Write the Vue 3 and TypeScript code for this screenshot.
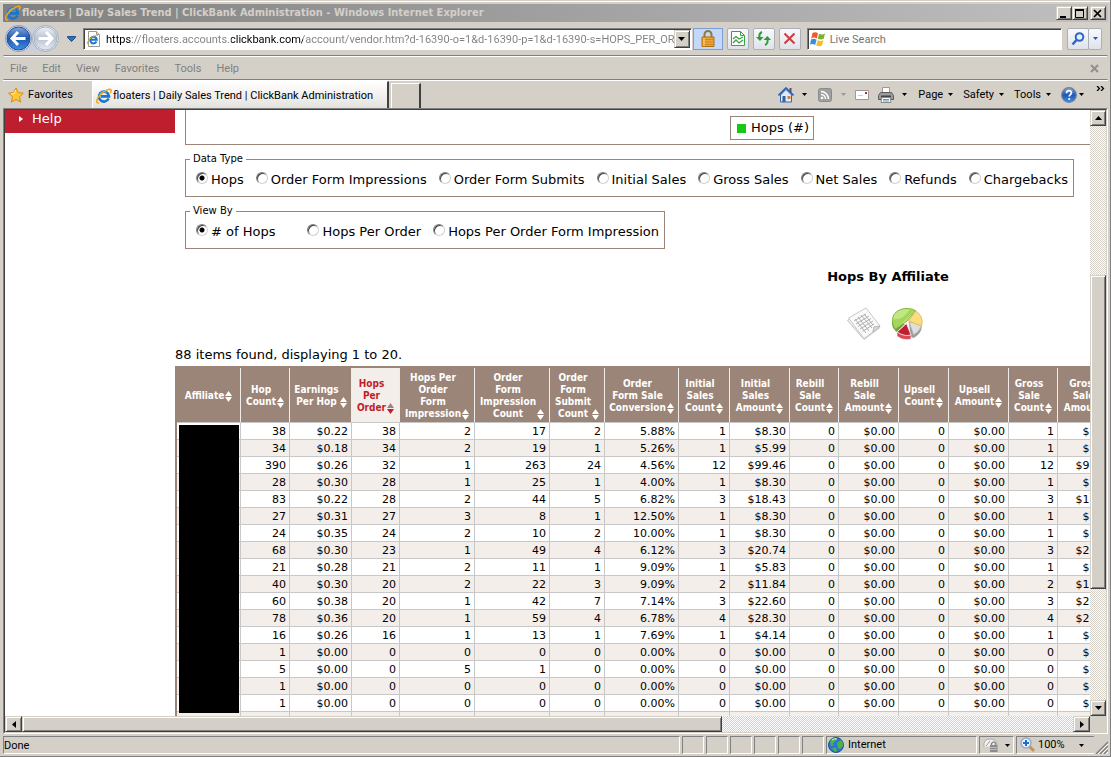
<script setup lang="ts">
import { ref } from 'vue'

interface Column {
  lines: string[]
  width: number
  sorted?: boolean
}

const columns: Column[] = [
  { lines: ['Affiliate'], width: 64 },
  { lines: ['Hop', 'Count'], width: 49 },
  { lines: ['Earnings', 'Per Hop'], width: 62 },
  { lines: ['Hops', 'Per', 'Order'], width: 48, sorted: true },
  { lines: ['Hops Per', 'Order', 'Form', 'Impression'], width: 75 },
  { lines: ['Order', 'Form', 'Impression', 'Count'], width: 75 },
  { lines: ['Order', 'Form', 'Submit', 'Count'], width: 55 },
  { lines: ['Order', 'Form Sale', 'Conversion'], width: 74 },
  { lines: ['Initial', 'Sales', 'Count'], width: 51 },
  { lines: ['Initial', 'Sales', 'Amount'], width: 60 },
  { lines: ['Rebill', 'Sale', 'Count'], width: 49 },
  { lines: ['Rebill', 'Sale', 'Amount'], width: 60 },
  { lines: ['Upsell', 'Count'], width: 50 },
  { lines: ['Upsell', 'Amount'], width: 60 },
  { lines: ['Gross', 'Sale', 'Count'], width: 49 },
  { lines: ['Gross', 'Sale', 'Amount'], width: 60 },
]

type Figures = [string, string, string, string, string, string, string, string, string]

const figures: Figures[] = [
  ['38', '$0.22', '38', '2', '17', '2', '5.88%', '1', '$8.30'],
  ['34', '$0.18', '34', '2', '19', '1', '5.26%', '1', '$5.99'],
  ['390', '$0.26', '32', '1', '263', '24', '4.56%', '12', '$99.46'],
  ['28', '$0.30', '28', '1', '25', '1', '4.00%', '1', '$8.30'],
  ['83', '$0.22', '28', '2', '44', '5', '6.82%', '3', '$18.43'],
  ['27', '$0.31', '27', '3', '8', '1', '12.50%', '1', '$8.30'],
  ['24', '$0.35', '24', '2', '10', '2', '10.00%', '1', '$8.30'],
  ['68', '$0.30', '23', '1', '49', '4', '6.12%', '3', '$20.74'],
  ['21', '$0.28', '21', '2', '11', '1', '9.09%', '1', '$5.83'],
  ['40', '$0.30', '20', '2', '22', '3', '9.09%', '2', '$11.84'],
  ['60', '$0.38', '20', '1', '42', '7', '7.14%', '3', '$22.60'],
  ['78', '$0.36', '20', '1', '59', '4', '6.78%', '4', '$28.30'],
  ['16', '$0.26', '16', '1', '13', '1', '7.69%', '1', '$4.14'],
  ['1', '$0.00', '0', '0', '0', '0', '0.00%', '0', '$0.00'],
  ['5', '$0.00', '0', '5', '1', '0', '0.00%', '0', '$0.00'],
  ['1', '$0.00', '0', '0', '0', '0', '0.00%', '0', '$0.00'],
  ['1', '$0.00', '0', '0', '0', '0', '0.00%', '0', '$0.00'],
]

const rows: string[][] = figures.map((f) => ['', ...f, '0', '$0.00', '0', '$0.00', f[7], f[8]])

const dataTypes = ['Hops', 'Order Form Impressions', 'Order Form Submits', 'Initial Sales', 'Gross Sales', 'Net Sales', 'Refunds', 'Chargebacks']
const viewBys = ['# of Hops', 'Hops Per Order', 'Hops Per Order Form Impression']
const menus = ['File', 'Edit', 'View', 'Favorites', 'Tools', 'Help']
const commands = ['Page', 'Safety', 'Tools']

const dataType = ref('Hops')
const viewBy = ref('# of Hops')
const url = ref('https://floaters.accounts.clickbank.com/account/vendor.htm?d-16390-o=1&d-16390-p=1&d-16390-s=HOPS_PER_OR')
</script>

<template>
  <div class="window">
    <svg class="defs" width="0" height="0" aria-hidden="true">
      <defs>
        <linearGradient id="orb" x1="0" y1="0" x2="0" y2="1">
          <stop offset="0" stop-color="#7fa6df" /><stop offset=".5" stop-color="#1f56b0" /><stop offset="1" stop-color="#3f8fe8" />
        </linearGradient>
        <linearGradient id="pale" x1="0" y1="0" x2="0" y2="1">
          <stop offset="0" stop-color="#eef1f6" /><stop offset=".5" stop-color="#b9c2d1" /><stop offset="1" stop-color="#e4ebf5" />
        </linearGradient>
        <symbol id="ie" viewBox="0 0 16 16">
          <path d="M12.6 10.6A5 5 0 1 1 13 8.4H5" fill="none" stroke="#1976cf" stroke-width="2.6" />
          <path d="M4 6.2A4.5 4.5 0 0 1 10.5 4.300" fill="none" stroke="#63bdf5" stroke-width="1.200" />
          <path d="M3.200 14.800C-.8 15.800.2 10.800 4.600 6.400S14 .2 15 1.800c.5.8 0 2-.8 3.200" fill="none" stroke="#e9a91e" stroke-width="1.500" />
        </symbol>
        <symbol id="down" viewBox="0 0 5 3"><path d="M0 0h5L2.500 3z" /></symbol>
      </defs>
    </svg>

    <header class="titlebar">
      <svg class="i16"><use href="#ie" /></svg>
      <span class="title">floaters | Daily Sales Trend | ClickBank Administration - Windows Internet Explorer</span>
      <div class="winbtns">
        <button class="bevel" aria-label="Minimize"><svg width="10" height="9"><path d="M1 7h6v2H1z" /></svg></button>
        <button class="bevel" aria-label="Maximize"><svg width="10" height="9"><path d="M.5 1h8v7.500h-8z" fill="none" stroke="#000" /><path d="M0 0h9v2H0z" /></svg></button>
        <button class="bevel close" aria-label="Close"><svg width="10" height="9"><path d="M1 1l7 7M8 1L1 8" stroke="#000" stroke-width="1.700" /></svg></button>
      </div>
    </header>

    <div class="navrow">
      <div class="travel">
        <button aria-label="Back"><svg width="27" height="27" viewBox="0 0 27 27"><circle cx="13.500" cy="13.500" r="13" fill="#e9edf4" stroke="#8593ac" /><circle cx="13.500" cy="13.500" r="11.500" fill="url(#orb)" stroke="#274d8e" /><path d="M13 7l-6 6.500 6 6.500M8 13.500h12.500" fill="none" stroke="#fff" stroke-width="3" /></svg></button>
        <button aria-label="Forward"><svg width="27" height="27" viewBox="0 0 27 27"><circle cx="13.500" cy="13.500" r="13" fill="#e9edf4" stroke="#a3acbb" /><circle cx="13.500" cy="13.500" r="11.500" fill="url(#pale)" stroke="#a9b2c0" /><path d="M14 7l6 6.500-6 6.500M19 13.500H6.500" fill="none" stroke="#fff" stroke-width="3" /></svg></button>
      </div>
      <button class="recent" aria-label="Recent pages"><svg width="9" height="6"><path d="M.5.5h8v1l-4 4-4-4z" fill="#2e74b5" stroke="#1c4f8a" /></svg></button>
      <div class="address">
        <svg class="i16" viewBox="0 0 16 16"><path d="M2.500.5h8l3 3v12h-11z" fill="#fff" stroke="#999" /><path d="M10.500.5v3h3" fill="#ddd" stroke="#999" /><path d="M10.500 10.500a3.300 3.300 0 1 1 .3-1.800H4" fill="none" stroke="#1976cf" stroke-width="2" /><path d="M3 13C0 14 1 10.500 4 8s7-5 8-3" fill="none" stroke="#e9a91e" /></svg>
        <input class="url" type="text" v-model="url" aria-label="Address" />
        <button class="bevel drop" aria-label="Show addresses"><svg width="7" height="4"><path d="M0 0h7L3.500 4z" /></svg></button>
      </div>
      <button class="lock" aria-label="Security report"><svg width="14" height="17" viewBox="0 0 14 17"><path d="M3.500 8V4.500a3.500 3.500 0 0 1 7 0V8" fill="none" stroke="#8f7a3c" stroke-width="2" /><path d="M1 7h12v9.500H1z" fill="#eda52c" stroke="#b26d12" /><path d="M1 9.500h12M1 12h12M1 14.500h12" stroke="#c98a26" /><path d="M3 8v8" stroke="#ffdd8a" /></svg></button>
      <button class="tool" aria-label="Compatibility view"><svg width="14" height="15" viewBox="0 0 14 15"><path d="M.5.5h9l4 4v10H.5z" fill="#fff" stroke="#3aa13f" /><path d="M9.500.5v4h4" fill="none" stroke="#3aa13f" /><path d="M2 8l3-2.500L8 8l4-2M2 12l3-3 3 3 4-3" fill="none" stroke="#3aa13f" stroke-width="1.300" /></svg></button>
      <button class="tool" aria-label="Refresh"><svg width="15" height="15" viewBox="0 0 15 15"><path d="M6 1C3.500 2 3 4 3.500 7" fill="none" stroke="#2f9a38" stroke-width="2" /><path d="M0 6h7.500L4 10z" fill="#2f9a38" /><path d="M9 14c2.500-1 3-3 2.500-6" fill="none" stroke="#2f9a38" stroke-width="2" /><path d="M7.500 9H15l-3.700-4z" fill="#2f9a38" /></svg></button>
      <button class="tool" aria-label="Stop"><svg width="13" height="13"><path d="M1.500 1.500l10 10M11.500 1.500l-10 10" stroke="#cf3a43" stroke-width="2" /></svg></button>
      <div class="search">
        <svg class="i16" viewBox="0 0 16 16"><path d="M2.500 2Q5 .2 8 2.200L6.800 7.500Q4 5.800 1.200 7.400z" fill="#ee5a2a" /><path d="M9 2.700q3 1.500 6-.2l-1.300 5.300q-3 1.500-5.900 0z" fill="#7ab32e" /><path d="M1 8.500q2.700-1.600 5.500.2L5.200 14Q2.500 12.200 0 13.800z" fill="#3b8ede" /><path d="M7.600 9.200q3 1.500 5.800 0L12 14.500q-3 1.500-5.800-.1z" fill="#f8bc22" /></svg>
        <input type="text" placeholder="Live Search" aria-label="Live Search" />
      </div>
      <div class="split">
        <button class="tool go" aria-label="Search"><svg width="14" height="14"><circle cx="8.500" cy="5" r="3.800" fill="#e6f0ff" stroke="#2f66c4" stroke-width="2" /><path d="M5.500 8L1.500 12.500" stroke="#2f66c4" stroke-width="2.500" /></svg></button>
        <button class="tool more" aria-label="Search options"><svg width="5" height="3" fill="#215ab5"><use href="#down" /></svg></button>
      </div>
    </div>

    <nav class="menubar">
      <button v-for="m in menus" :key="m">{{ m }}</button>
      <button class="closebar" aria-label="Close toolbar"><svg width="9" height="9"><path d="M1 1l7 7M8 1L1 8" stroke="#8f8f8f" stroke-width="2" /></svg></button>
    </nav>

    <div class="tabrow">
      <button class="favs"><svg class="i16" viewBox="0 0 16 16"><path d="M8 .8l2.200 4.800 5.200.6-3.900 3.600 1.100 5.300L8 12.500l-4.600 2.600 1.100-5.300L.6 6.200l5.200-.6z" fill="#ffc936" stroke="#d98a12" /><path d="M7.700 3L6.300 6.500 3 7" fill="none" stroke="#fff3b0" /></svg>Favorites</button>
      <button class="tab"><svg class="i16"><use href="#ie" /></svg>floaters | Daily Sales Trend | ClickBank Administration</button>
      <button class="newtab" aria-label="New tab"></button>
      <div class="commands">
        <button aria-label="Home"><svg class="i16" viewBox="0 0 16 16"><path d="M11.500 1h2v4h-2z" fill="#555" /><path d="M2.500 8L8 2.500 13.500 8v7h-11z" fill="#dfe9fa" stroke="#3a66b8" /><path d="M.5 8.500L8 1l7.500 7.500" fill="none" stroke="#2b5bb6" stroke-width="1.600" /><path d="M4.500 9h3v6h-3z" fill="#365f9e" /><path d="M9.500 9h3v3h-3z" fill="#d9822f" /></svg></button>
        <svg class="arrow a1"><use href="#down" /></svg>
        <button aria-label="Feeds"><svg width="14" height="14" viewBox="0 0 14 14"><rect x=".5" y=".5" width="13" height="13" rx="2" fill="#a0a0a0" stroke="#8a8a8a" /><circle cx="4" cy="10" r="1.300" fill="#fff" /><path d="M3 6.500a4.500 4.500 0 0 1 4.500 4.500M3 3.500a7.500 7.500 0 0 1 7.500 7.500" fill="none" stroke="#fff" stroke-width="1.500" /></svg></button>
        <svg class="arrow a2"><use href="#down" /></svg>
        <button aria-label="Read mail"><svg width="14" height="10"><path d="M.5.5h13v9H.5z" fill="#fff" stroke="#9a9a9a" /><path d="M10 2h2v2h-2z" fill="#d3202c" /><path d="M3 5.500h5" stroke="#ccc" /></svg></button>
        <button class="print" aria-label="Print"><svg class="i16" viewBox="0 0 16 16"><path d="M4.500.5h7v5h-7z" fill="#fff" stroke="#999" /><path d="M2.500 5.500h11l2 3v4H.5v-4z" fill="#9b9b9b" stroke="#5c5c5c" /><path d="M3 9.500h10" stroke="#444" stroke-width="2" /><path d="M4 10.500h8l1 5H3z" fill="#fff" stroke="#8b8b8b" /><path d="M5 12.500h6M5 14h6" stroke="#4d9dbb" /></svg></button>
        <svg class="arrow a3"><use href="#down" /></svg>
        <button v-for="c in commands" :key="c" class="cmd">{{ c }}<svg class="arrow"><use href="#down" /></svg></button>
        <button class="cmd help" aria-label="Help"><svg width="16" height="16" viewBox="0 0 16 16"><circle cx="8" cy="8" r="7.300" fill="url(#orb)" stroke="#6c7f9c" stroke-width="1.300" /><path d="M5.500 6.300c0-3.500 5-3.300 5-.5 0 1.700-2.300 1.800-2.300 3.700" fill="none" stroke="#fff" stroke-width="1.700" /><circle cx="8.200" cy="12" r="1.100" fill="#fff" /></svg><svg class="arrow"><use href="#down" /></svg></button>
        <button class="chev" aria-label="More commands"><svg width="9" height="5"><path d="M1 0l2.500 2.500L1 5M5 0l2.500 2.500L5 5" fill="none" stroke="#000" stroke-width="1.300" /></svg></button>
      </div>
    </div>

    <div class="frame">
      <div class="frame-in">
        <div class="view">
          <aside><a class="helplink" href="#help"><svg width="4" height="6"><path d="M0 0l4 3-4 3z" fill="#fff" /></svg>Help</a></aside>
          <main>
            <div class="panels">
              <div class="chart"><div class="legend"><i></i>Hops (#)</div></div>
              <fieldset class="types">
                <legend>Data Type</legend>
                <label v-for="d in dataTypes" :key="d"><input type="radio" name="datatype" :value="d" v-model="dataType" />{{ d }}</label>
              </fieldset>
              <fieldset class="views">
                <legend>View By</legend>
                <label v-for="v in viewBys" :key="v"><input type="radio" name="viewby" :value="v" v-model="viewBy" />{{ v }}</label>
              </fieldset>
            </div>
            <h2>Hops By Affiliate</h2>
            <div class="modes">
              <button aria-label="Table view">
                <svg width="36" height="34" viewBox="0 0 36 34">
                  <path d="M1.500 13.500L18 2.500l16 18-16 12z" fill="#f1f1f1" stroke="#c5c5c5" />
                  <path d="M2.500 11L20 1l14 18-6 1-1 5-9 6.500z" fill="#fafafa" stroke="#c8c8c8" />
                  <path d="M34 19l-6 1-1 5z" fill="#ddd" stroke="#bbb" />
                  <path d="M9 12l11 14M12 10l11 14M15 8l11 13M18 7l9 11M8 14l12-7M10 17l13-8M12 19.500l13-8M14 22l13-8M16.500 24.500L28 17" stroke="#b0b0b0" fill="none" />
                </svg>
              </button>
              <button aria-label="Chart view">
                <svg width="32" height="34" viewBox="0 0 32 34">
                  <path d="M18 15L30.500 16v6q-2 6-8 9l-3-1z" fill="#9c9c9c" />
                  <path d="M18 15l12.500 1v3q-2 6-8 9z" fill="#dedede" stroke="#a5a5a5" stroke-width=".7" />
                  <path d="M1 13q-1 7 4.500 12L14 17z" fill="#6fa22b" />
                  <path d="M16 14L4.500 22C-1 15 0 2 16 1.500q5 0 8.500 2z" fill="#c3e684" stroke="#82b43a" />
                  <path d="M24.500 3.500L4.500 22Q1 17 1.500 12q10 2 18-10.300 3 .5 5 1.800z" fill="#8fca42" opacity=".6" />
                  <path d="M17.500 14l7.500-10q8 6 5.500 15z" fill="#fbdc81" stroke="#e6bd4e" />
                  <path d="M15.500 16.500L20 28q-7 2-14-3z" fill="#bf1f30" stroke="#fff" stroke-width=".7" />
                  <path d="M6 25q7 5 14 3v4q-8 2-14-3z" fill="#d94956" stroke="#fff" stroke-width=".5" />
                </svg>
              </button>
            </div>
            <p class="found">88 items found, displaying 1 to 20.</p>
            <div class="tablewrap">
              <table>
                <colgroup><col v-for="(c, i) in columns" :key="i" :style="{ width: c.width + 'px' }" /></colgroup>
                <thead>
                  <tr>
                    <th v-for="(c, i) in columns" :key="i" scope="col" :class="{ sorted: c.sorted }">
                      <a href="#sort">
                        <span><template v-for="(l, n) in c.lines" :key="n"><br v-if="n" />{{ l }}</template></span>
                        <svg width="7" height="11"><path class="up" d="M3.500 0L7 5H0z" /><path d="M3.500 11L7 6H0z" /></svg>
                      </a>
                    </th>
                  </tr>
                </thead>
                <tbody>
                  <tr v-for="(r, i) in rows" :key="i"><td v-for="(v, j) in r" :key="j">{{ v }}</td></tr>
                  <tr class="rest"><td v-for="(c, j) in columns" :key="j"></td></tr>
                </tbody>
              </table>
              <div class="redacted"></div>
            </div>
          </main>
        </div>
        <div class="vbar">
          <button class="bevel" aria-label="Scroll up"><svg width="7" height="4"><path d="M0 4h7L3.500 0z" /></svg></button>
          <div class="vtop"></div><div class="bevel vthumb"></div><div class="vend"></div>
          <button class="bevel" aria-label="Scroll down"><svg width="7" height="4"><path d="M0 0h7L3.500 4z" /></svg></button>
        </div>
        <div class="hbar">
          <button class="bevel" aria-label="Scroll left"><svg width="4" height="7"><path d="M4 0v7L0 3.500z" /></svg></button>
          <div class="bevel hthumb"></div><div class="hend"></div>
          <button class="bevel" aria-label="Scroll right"><svg width="4" height="7"><path d="M0 0v7l4-3.500z" /></svg></button>
        </div>
      </div>
    </div>

    <footer class="status">
      <div class="pane done">Done</div>
      <div v-for="n in 6" :key="n" class="pane small"></div>
      <div class="pane zone"><svg class="i16" viewBox="0 0 16 16"><circle cx="8" cy="8" r="7.500" fill="#2c74d6" stroke="#1b4f9e" /><path d="M2 4q3-4 7-3l-1 3-3 2 1 2-3 1zM9 6l4-3q3 3 2 6l-3 3-2-1zM4 11l4 0 1 3-2 1z" fill="#4fb248" /><path d="M4 3q3-2 5-1" stroke="#d8efff" fill="none" /></svg>Internet</div>
      <button class="pane safe" aria-label="Protected mode"><svg class="i16" viewBox="0 0 16 16"><path d="M1 10Q0 2 7 2t7 6" fill="#f3f3f3" stroke="#aaa" /><path d="M3 9l4-5" stroke="#999" /><path d="M8.500 8V6.500q2.500-3 4 0V8" fill="none" stroke="#888" stroke-width="1.500" /><path d="M7 8h7.500v7H7z" fill="#8b8b8b" /><path d="M7 10.500h7M7 12.500h7" stroke="#bbb" /></svg><svg class="arrow"><use href="#down" /></svg></button>
      <button class="pane zoomer"><svg class="i16" viewBox="0 0 16 16"><path d="M9 9l5 5" stroke="#c79255" stroke-width="3" /><circle cx="6" cy="6" r="5" fill="#e6f3ff" stroke="#9aa9bd" stroke-width="1.500" /><path d="M6 3v6M3 6h6" stroke="#1d6fd1" stroke-width="2" /></svg><span>100%</span><svg class="arrow"><use href="#down" /></svg></button>
      <svg class="grip" width="12" height="13"><path d="M0 13L12 1M4 13l8-8M8 13l4-4" stroke="#808080" stroke-width="1.500" /><path d="M2 13L12 3M6 13l6-6M10 13l2-2" stroke="#fff" /></svg>
    </footer>
  </div>
</template>

<style>
body { background: #d4d0c8; }
</style>

<style scoped>
* { box-sizing: border-box; }
.window {
  height: 100vh; overflow: hidden; display: flex; flex-direction: column;
  padding: 4px 3px 3px 3px; background: #d4d0c8; color: #000;
  box-shadow: inset -1px -1px #808080, inset 0 1px #d4d0c8, inset 0 2px #fff;
  font: 11px/14px Roboto, sans-serif; white-space: nowrap;
}
.defs { position: absolute; }
button { font: inherit; color: inherit; background: none; border: 0; padding: 0; margin: 0; display: flex; align-items: center; justify-content: center; flex: none; }
svg { flex: none; display: block; }
.i16 { width: 16px; height: 16px; }
.arrow { width: 5px; height: 3px; }
.bevel { background: #d4d0c8; border: 1px solid; border-color: #d4d0c8 #404040 #404040 #d4d0c8; box-shadow: inset 1px 1px #fff, inset -1px -1px #808080; }

.titlebar { flex: none; height: 18px; display: flex; align-items: center; padding: 0 2px; background: linear-gradient(90deg, #808080, #c0c0c0); color: #d4d0c8; font-family: "DejaVu Sans Condensed", "DejaVu Sans", sans-serif; font-weight: bold; }
.title { flex: 1; margin-left: 1px; }
.winbtns { display: flex; }
.winbtns button { width: 16px; height: 14px; }
.winbtns .close { margin-left: 2px; }

.navrow { flex: none; height: 33px; display: flex; align-items: center; padding: 0 6px 0 2px; }
.travel { display: flex; flex: none; border-radius: 14px; background: #c9d0dc; }
.recent { width: 24px; height: 20px; }
.address { flex: 610; min-width: 0; height: 22px; display: flex; align-items: center; background: #fff; border: 1px solid; border-color: #808080 #fff #fff #808080; box-shadow: inset 1px 1px #404040; padding: 1px 1px 0 2px; }
.url { flex: 1; min-width: 0; border: 0; outline: 0; padding: 2px 0 0; margin: 0 0 0 4px; font: inherit; color: transparent;
  background: linear-gradient(90deg, #000 25px, #808080 25px 125px, #000 125px 197px, #808080 197px); background-clip: text; -webkit-background-clip: text; }
.drop { width: 16px; height: 18px; }
.lock { width: 30px; height: 22px; background: #c3d8fa; border: 1px solid #7d9fd0; margin: 0 4px 0 1px; }
.tool { width: 22px; height: 22px; border: 1px solid #a9b0bc; border-radius: 2px; background: linear-gradient(#f8f9fb, #dfe3ea); margin-right: 4px; }
.search { flex: 254; min-width: 0; height: 22px; display: flex; align-items: center; background: #fff; border: 1px solid; border-color: #808080 #fff #fff #808080; box-shadow: inset 1px 1px #404040; margin: 0 5px 0 2px; padding-left: 2px; }
.search input { flex: 1; min-width: 0; border: 0; outline: 0; padding: 2px 0 0; margin-left: 4px; font: inherit; background: none; }
.search input::placeholder { color: #747474; opacity: 1; }
.split { display: flex; }
.split .tool { margin: 0; }
.split .more { width: 14px; margin-left: -1px; }

.menubar { flex: none; height: 25px; display: flex; align-items: center; gap: 15px; padding: 2px 8px 0 6px; color: #808080; border: 1px solid; border-color: #808080 transparent; box-shadow: inset 0 1px #fff, 0 1px #fff; }
.closebar { margin-left: auto; }

.tabrow { flex: none; height: 28px; display: flex; align-items: flex-end; padding-top: 1px; }
.favs { height: 26px; width: 86px; gap: 4px; justify-content: flex-start; padding: 0 0 0 5px; margin-right: 3px; }
.tab { height: 27px; width: 297px; justify-content: flex-start; gap: 1px; padding: 1px 0 0 3px; border: 1px solid #fff; border-right: 2px solid #404040; border-bottom: 0; background: linear-gradient(#fff, #e4e2de); }
.newtab { width: 30px; height: 25px; margin-left: 2px; border: 1px solid #fff; border-right: 2px solid #404040; border-bottom: 0; }
.commands { margin-left: auto; height: 27px; display: flex; align-items: center; padding-right: 3px; }
.a1 { margin: 0 11px 0 8px; }
.a2 { margin: 0 9px 0 9px; fill: #999; }
.print { margin-left: 9px; }
.a3 { margin: 0 11px 0 8px; }
.cmd { gap: 5px; margin-right: 10px; }
.cmd.help { gap: 2px; margin-right: 0; }
.chev { align-self: flex-start; margin: 5px 0 0 12px; }

.frame { flex: 1; min-height: 0; border: 1px solid; border-color: #808080 #fff #fff #808080; }
.frame-in { height: 100%; border: 1px solid; border-color: #404040 #d4d0c8 #d4d0c8 #404040; display: grid; grid-template: minmax(0, 1fr) 16px / minmax(0, 1fr) 16px; }
.view { overflow: hidden; display: flex; background: #fff; font: 13px/16px "DejaVu Sans", sans-serif; }
aside { flex: none; width: 170px; }
.helplink { display: flex; align-items: center; gap: 9px; height: 23px; padding: 0 0 5px 14px; background: #be1e2d; color: #fff; text-decoration: none; }
main { flex: none; width: 1426px; }
.panels { padding-left: 10px; }
.chart { width: 1174px; height: 35px; border: 1px solid #9b8578; border-top: 0; display: flex; justify-content: center; align-items: flex-start; padding-top: 6px; margin-bottom: 8px; }
.legend { height: 24px; border: 1px solid #9b8578; display: flex; align-items: center; gap: 5px; padding: 0 4px 0 6px; }
.legend i { width: 9px; height: 9px; background: #14c814; }
fieldset { display: flex; width: max-content; margin: 0; padding: 6px 5px 7px 10px; border: 1px solid #9b8578; gap: 12px; }
fieldset legend { font-size: 10px; line-height: 12px; padding: 0 3px; margin-left: -6px; }
fieldset label { display: flex; align-items: flex-start; gap: 3px; line-height: 18px; }
.types { margin-bottom: 8px; }
.views label:first-of-type { margin-right: 20px; }
input[type="radio"] { appearance: none; flex: none; width: 12px; height: 12px; margin: 1px 0 0; border-radius: 50%; border: 1px solid; border-color: #808080 #d4d0c8 #d4d0c8 #808080; background: #fff; box-shadow: inset 1px 1px #404040; }
input[type="radio"]:checked { background: radial-gradient(circle at 5px 5px, #000 2px, #fff 3px); }
h2 { margin: 20px 0 0; font-size: 13px; line-height: 16px; text-align: center; }
.modes { display: flex; justify-content: center; gap: 9px; margin-top: 22px; padding-right: 7px; }
.found { margin: 6px 0 3px; line-height: 16px; }

.tablewrap { position: relative; width: max-content; }
table { table-layout: fixed; width: 943px; border-collapse: separate; border-spacing: 0; border: 2px solid #9b8578; border-bottom: 0; border-right: 0; }
th { height: 54px; padding: 2px 0 0; background: #9b8578; border-right: 1px solid #f0ecea; font: bold 10px/12px "DejaVu Sans Condensed", "DejaVu Sans", sans-serif; }
th a { display: flex; justify-content: center; align-items: flex-end; gap: 1px; color: #fff; fill: #fff; text-decoration: none; }
th.sorted { background: #f3eeea; }
th.sorted a { color: #be1e2d; fill: #be1e2d; }
th.sorted .up { fill: #9b8578; }
td { height: 17px; padding: 2px 3px 0 0; border-top: 1px solid #c8c8c8; border-right: 1px solid #c8c8c8; font-size: 11px; line-height: 14px; text-align: right; }
tbody tr:nth-child(even) { background: #f3eeea; }
.redacted { position: absolute; left: 4px; top: 59px; width: 60px; height: 288px; background: #000; }

.vbar, .hbar { display: flex; background: repeating-conic-gradient(#fff 0 25%, #d4d0c8 0 50%) 0 0 / 2px 2px; }
.vbar { flex-direction: column; }
.vbar button { width: 16px; height: 16px; }
.hbar button { width: 17px; height: 16px; }
.vtop { flex: 150; }
.vthumb { flex: 313; }
.vend { flex: 111; }
.hthumb { flex: 700; }
.hend { flex: 352; }

.status { flex: none; height: 18px; margin-top: 2px; display: flex; align-items: stretch; gap: 2px; }
.pane { display: flex; align-items: center; border: 1px solid; border-color: #808080 #fff #fff #808080; }
.done { flex: 1; padding-top: 1px; }
.small { width: 22px; }
.zone { width: 151px; gap: 4px; padding-left: 1px; }
.safe { width: 35px; gap: 6px; }
.zoomer { width: 78px; gap: 2px; justify-content: flex-start; padding-left: 3px; border-right: 0; }
.zoomer span { flex: 1; text-align: left; }
.zoomer .arrow { margin-right: 10px; }
.grip { align-self: flex-end; }
</style>
